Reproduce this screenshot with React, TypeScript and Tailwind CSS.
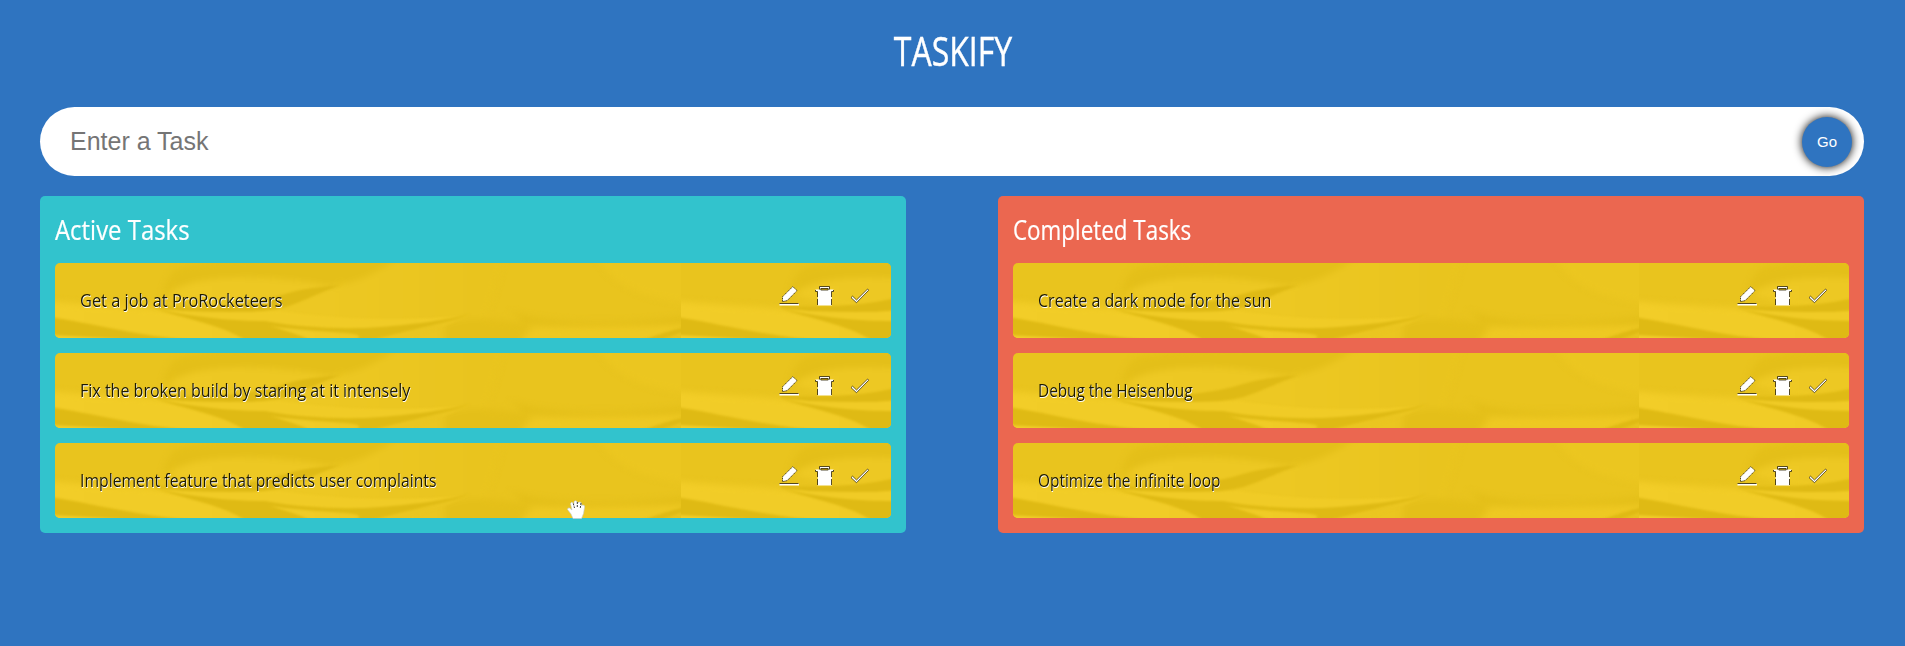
import React from "react";

const active = [
  { text: "Get a job at ProRocketeers", fit: "scale-x-[0.861]" },
  { text: "Fix the broken build by staring at it intensely", fit: "scale-x-[0.844]" },
  { text: "Implement feature that predicts user complaints", fit: "scale-x-[0.83]" },
];
const completed = [
  { text: "Create a dark mode for the sun", fit: "scale-x-[0.843]" },
  { text: "Debug the Heisenbug", fit: "scale-x-[0.807]" },
  { text: "Optimize the infinite loop", fit: "scale-x-[0.812]" },
];

type Task = { text: string; fit: string };

function Paper() {
  return (
    <svg width="626" height="75" viewBox="0 0 626 75" className="block shrink-0">
      <defs>
        <linearGradient id="fold" x1="0" x2="1">
          <stop offset="0" stopColor="#eec924" />
          <stop offset="0.45" stopColor="#edc823" />
          <stop offset="0.95" stopColor="#e9c41e" />
        </linearGradient>
        <linearGradient id="base" x1="0" x2="1">
          <stop offset="0" stopColor="#f2cd28" />
          <stop offset="0.6" stopColor="#f0cb26" />
          <stop offset="1" stopColor="#e9c41e" />
        </linearGradient>
      </defs>
      <rect width="626" height="75" fill="#e9c41e" />
      <g className="blur-[3px]">
        <path d="M-10 38 C60 44 90 44 110 46 L240 60 L400 58 L420 85 L-10 85Z" fill="url(#base)" />
        <path d="M115 32 C130 0 170 12 200 14 C250 16 270 22 285 22 L355 -8 L450 -8 L430 60 L300 66 L260 66 L160 45Z" fill="url(#fold)" />
        <path d="M125 4 C180 -8 260 -8 345 -6 C320 12 300 20 275 23 C230 14 180 12 145 18 C125 22 115 28 108 34 C110 20 114 10 125 4Z" fill="#e4bf19" />
        <path d="M390 62 C415 52 435 56 475 61 L465 82 L390 82Z" fill="#e4bf19" />
        <path d="M455 48 C490 62 570 63 636 52 L636 60 C560 67 500 63 470 60Z" fill="#e3be18" />
        <path d="M480 65 L636 62 L580 84 L460 84Z" fill="#eec822" />
        <path d="M540 -8 L636 -8 L636 40 C590 36 560 25 540 -8Z" fill="#ebc620" />
      </g>
      <g className="blur-[1px]">
        <path d="M100 42 C145 46 195 42 230 31 C250 25 265 24 285 22 C250 36 235 45 215 47 C175 53 130 49 100 45Z" fill="#dfba15" />
        <path d="M98 46 C150 50 190 49 225 48 C260 53 330 61 415 52 C370 66 300 68 250 63 C190 58 140 60 98 46Z" fill="#f0cb26" />
        <path d="M98 45 C140 55 180 58 210 58 C240 64 290 67 325 64 C365 61 390 57 415 51 C390 62 360 65 318 77 L300 77 C320 68 270 71 215 63 C235 69 245 72 255 77 L190 77 C165 61 130 56 98 45Z" fill="#dfba14" />
        <path d="M320 77 C360 65 390 60 412 53 C390 64 370 70 348 77Z" fill="#eac520" />
        <path d="M-4 54 C35 60 70 70 132 77 L-4 77Z" fill="#dfba14" />
        <path d="M-4 72 L70 76 L-4 78Z" fill="#f2ce2a" />
        <path d="M588 77 C605 71 615 68 630 64 L630 68 L606 77Z" fill="#dfba14" />
      </g>
    </svg>
  );
}

function Icons() {
  return (
    <svg width="92" height="24" viewBox="0 0 92 24" className="mr-[22px] mb-[9px] shrink-0" fill="#fff" stroke="#2a2000" strokeWidth="0.8">
      <path d="M5.5 17.6 L5.5 12.8 L15.8 2.5 L20 6.7 L10.2 16.6Z" strokeDasharray="1.5 0.7" />
      <path d="M2.5 19.5 H22 V21.5 H2.5Z" stroke="none" />
      <path d="M2.5 19.5 H21.5" />
      <path d="M42.5 2.5 H52.5 V5.5 H56.5 V7.5 H54.8 V21.5 H40.7 V7.5 H38.5 V5.5 H42.5Z" stroke="none" />
      <path d="M42.5 5.5 V2.5 H52.5 V5.5 M38.5 6 V7.5 H40.5 V13 M56.5 6 V7.5 H54.5 V13 M40.5 15 V21 M54.5 15 V21" fill="none" />
      <path d="M43.8 4.5 H51.2 V6 H43.8Z" fill="#e9c41e" />
      <path d="M74 13.6 L75.6 12.2 L79.5 16 L90.6 5 L91.7 6.3 L79.5 18.7Z" strokeWidth="0.7" />
    </svg>
  );
}

function Panel({ title, tasks, color, fit }: { title: string; tasks: Task[]; color: string; fit: string }) {
  return (
    <section className={`flex h-[337px] w-[866px] flex-col gap-[15px] rounded-[5px] p-[15px] ${color}`}>
      <h2 className="flex h-[37px] items-center text-[28px] leading-[37px] text-white">
        <span className={`origin-left whitespace-nowrap [-webkit-text-stroke:0.2px_white] ${fit}`}>{title}</span>
      </h2>
      {tasks.map((t) => (
        <article key={t.text} className="relative h-[75px] w-[836px] overflow-hidden rounded-[5px]">
          <div className="absolute inset-0 flex">
            <Paper />
            <Paper />
          </div>
          <div className="relative flex h-full items-center justify-between pl-[25px]">
            <span
              className={`origin-left whitespace-nowrap text-[19px] text-[#1d1a00] [text-shadow:0.6px_0.8px_0_#fff] ${t.fit}`}
            >
              {t.text}
            </span>
            <Icons />
          </div>
        </article>
      ))}
    </section>
  );
}

export default function App() {
  return (
    <main className="relative flex h-[646px] w-[1905px] flex-col overflow-hidden bg-[#2f74c0] pl-10 font-['Open_Sans',sans-serif]">
      <h1 className="flex h-[107px] w-[1826px] items-center justify-center pb-[5px] text-[40px] text-white">
        <span className="scale-x-[0.8] [-webkit-text-stroke:0.4px_white]">TASKIFY</span>
      </h1>
      <form className="flex h-[69px] w-[1824px] items-center justify-between rounded-full bg-white pr-3 pl-[30px] font-['Liberation_Sans',sans-serif]">
        <input
          className="h-full grow bg-transparent text-[25px] outline-none placeholder:text-[#757575]"
          placeholder="Enter a Task"
        />
        <button type="button" className="size-[50px] rounded-full bg-[#2f74c0] pt-px text-[15px] text-white shadow-[0_0_10px_black]">
          Go
        </button>
      </form>
      <div className="mt-5 flex w-[1824px] justify-between">
        <Panel title="Active Tasks" tasks={active} color="bg-[#32c3cd]" fit="scale-x-[0.854]" />
        <Panel title="Completed Tasks" tasks={completed} color="bg-[#eb6750]" fit="scale-x-[0.8]" />
      </div>
      <svg className="absolute top-[499px] left-[566px]" width="21" height="21" viewBox="0 0 21 21">
        <path
          d="M7 19.5 L5 15 L1.5 10.5 Q1.5 8.5 3.5 9 L6 11 L4.5 4.5 Q5.5 2.5 7 4 L8 5 L8 2.5 Q9.5 1 11 2.5 L12 4 L13 3 Q15 2.5 15.5 4.5 L15.5 6.5 L17 6 Q19 6 18.5 8.5 L17.5 14.5 L15.5 19.5Z"
          fill="#fff"
          stroke="#bfcbd0"
          strokeWidth=".6"
        />
        <path d="M7.3 4.5 L8.5 9 M11.3 3 V8 M15 4 L14.3 9" fill="none" stroke="#222" strokeWidth=".9" strokeDasharray="2 1" />
      </svg>
    </main>
  );
}
